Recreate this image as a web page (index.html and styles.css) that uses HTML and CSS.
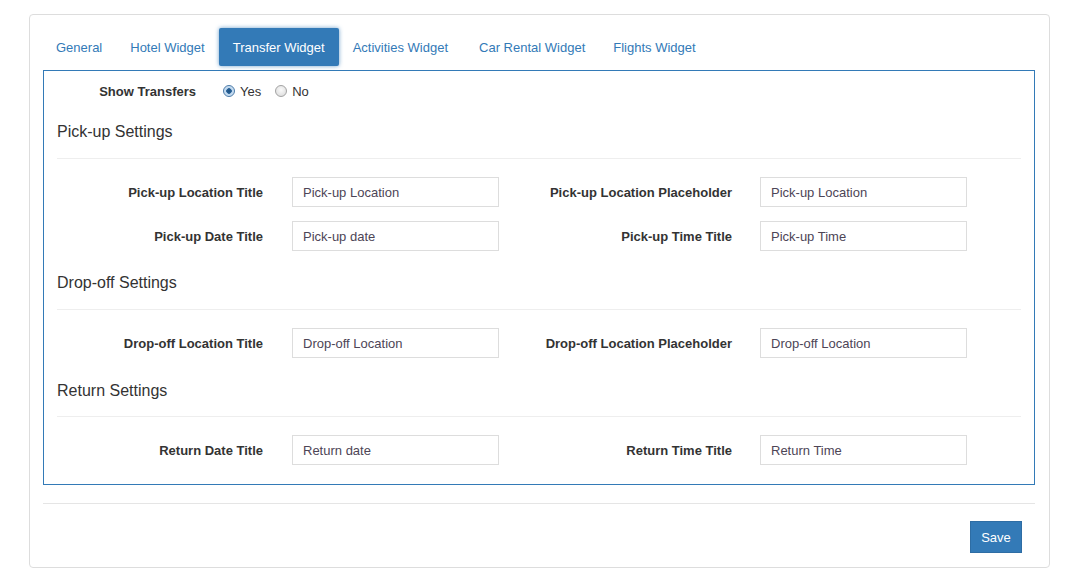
FILE: index.html
```html
<!DOCTYPE html>
<html>
<head>
<meta charset="utf-8">
<link rel="stylesheet" href="styles.css">
</head>
<body>
<div class="panel">
  <ul class="tabs">
    <li class="tab">General</li>
    <li class="tab">Hotel Widget</li>
    <li class="tab active">Transfer Widget</li>
    <li class="tab">Activities Widget</li>
    <li class="tab">Car Rental Widget</li>
    <li class="tab">Flights Widget</li>
  </ul>
  <div class="box">
    <div class="show-row">
      <span class="show-label">Show Transfers</span>
      <span class="radio"><span class="dot checked"></span>Yes</span>
      <span class="radio"><span class="dot"></span>No</span>
    </div>

    <h4 class="section">Pick-up Settings</h4>
    <div class="rule"></div>
    <div class="row">
      <label class="lbl">Pick-up Location Title</label>
      <div class="inp">Pick-up Location</div>
      <label class="lbl lbl2">Pick-up Location Placeholder</label>
      <div class="inp">Pick-up Location</div>
    </div>
    <div class="row">
      <label class="lbl">Pick-up Date Title</label>
      <div class="inp">Pick-up date</div>
      <label class="lbl lbl2">Pick-up Time Title</label>
      <div class="inp">Pick-up Time</div>
    </div>

    <h4 class="section">Drop-off Settings</h4>
    <div class="rule"></div>
    <div class="row">
      <label class="lbl">Drop-off Location Title</label>
      <div class="inp">Drop-off Location</div>
      <label class="lbl lbl2">Drop-off Location Placeholder</label>
      <div class="inp">Drop-off Location</div>
    </div>

    <h4 class="section section-last">Return Settings</h4>
    <div class="rule rule-last"></div>
    <div class="row last">
      <label class="lbl">Return Date Title</label>
      <div class="inp">Return date</div>
      <label class="lbl lbl2">Return Time Title</label>
      <div class="inp">Return Time</div>
    </div>
  </div>
  <div class="footer-rule"></div>
  <div class="actions">
    <button class="btn">Save</button>
  </div>
</div>
</body>
</html>
```

FILE: styles.css
```css
* { box-sizing: border-box; }
html, body { margin: 0; padding: 0; background: #fff; }
body {
  font-family: "Liberation Sans", Arial, sans-serif;
  font-size: 13px;
  color: #333;
}
.panel {
  margin: 14px 0 0 29px;
  width: 1021px;
  height: 554px;
  border: 1px solid #ddd;
  border-radius: 4px;
  padding: 13px 14px 0 13px;
}
.tabs {
  list-style: none;
  margin: 0 0 4px 0;
  padding: 0;
  display: flex;
  height: 38px;
}
.tab {
  padding: 1px 14px 0 14px;
  line-height: 37px;
  color: #337ab7;
  border-radius: 2px;
}
.tab:nth-child(1) { padding-left: 13px; }
.tab:nth-child(4) { padding-right: 17px; }
.tab.active {
  background: #337ab7;
  color: #fff;
  box-shadow: 0 0 4px rgba(51, 122, 183, 0.7);
}
.box {
  border: 1px solid #337ab7;
  padding: 10px 13px 19px 13px;
}
.show-row {
  display: flex;
  align-items: center;
  height: 20px;
  margin-bottom: 20px;
}
.show-label {
  width: 139px;
  text-align: right;
  font-weight: bold;
  margin-right: 27px;
}
.radio {
  display: inline-flex;
  align-items: center;
  margin-right: 14px;
  color: #333;
  font-size: 13px;
}
.dot {
  width: 12px;
  height: 12px;
  border-radius: 50%;
  border: 1px solid #a3a3a3;
  background: radial-gradient(circle at 50% 40%, #fafafa 0%, #e2e2e2 70%, #d6d6d6 100%);
  margin-right: 5px;
}
.dot.checked {
  border-color: #4a7aa8;
  background: radial-gradient(circle, #1c4f80 0, #2a6398 2.5px, #bcd6ee 3px, #dce9f6 100%);
}
.section {
  margin: 0;
  padding-top: 1px;
  font-size: 16px;
  font-weight: normal;
  line-height: 20px;
  height: 21px;
  color: #333;
}
.row + .section { margin-top: 21px; }
.row + .section-last { margin-top: 22px; }
.rule {
  border-top: 1px solid #eee;
  margin: 16px 0 18px 0;
}
.rule.rule-last { margin-top: 15px; }
.row {
  display: grid;
  grid-template-columns: 235px 207px 261px 207px;
  align-items: center;
  margin-bottom: 14px;
}
.row.last { margin-bottom: 0; }
.lbl {
  text-align: right;
  font-weight: bold;
  padding-right: 29px;
}
.lbl2 { padding-right: 28px; }
.inp {
  height: 30px;
  border: 1px solid #ddd;
  padding: 1px 10px 0 10px;
  line-height: 27px;
  color: #4d4556;
  font-size: 13px;
}
.footer-rule {
  border-top: 1px solid #e5e5e5;
  margin-top: 18px;
}
.actions {
  display: flex;
  justify-content: flex-end;
  padding: 17px 13px 0 0;
}
.btn {
  width: 52px;
  height: 32px;
  background: #337ab7;
  border: 1px solid #2e6da4;
  color: #fff;
  font-family: "Liberation Sans", Arial, sans-serif;
  font-size: 13px;
  padding: 0;
  border-radius: 0;
}
```
